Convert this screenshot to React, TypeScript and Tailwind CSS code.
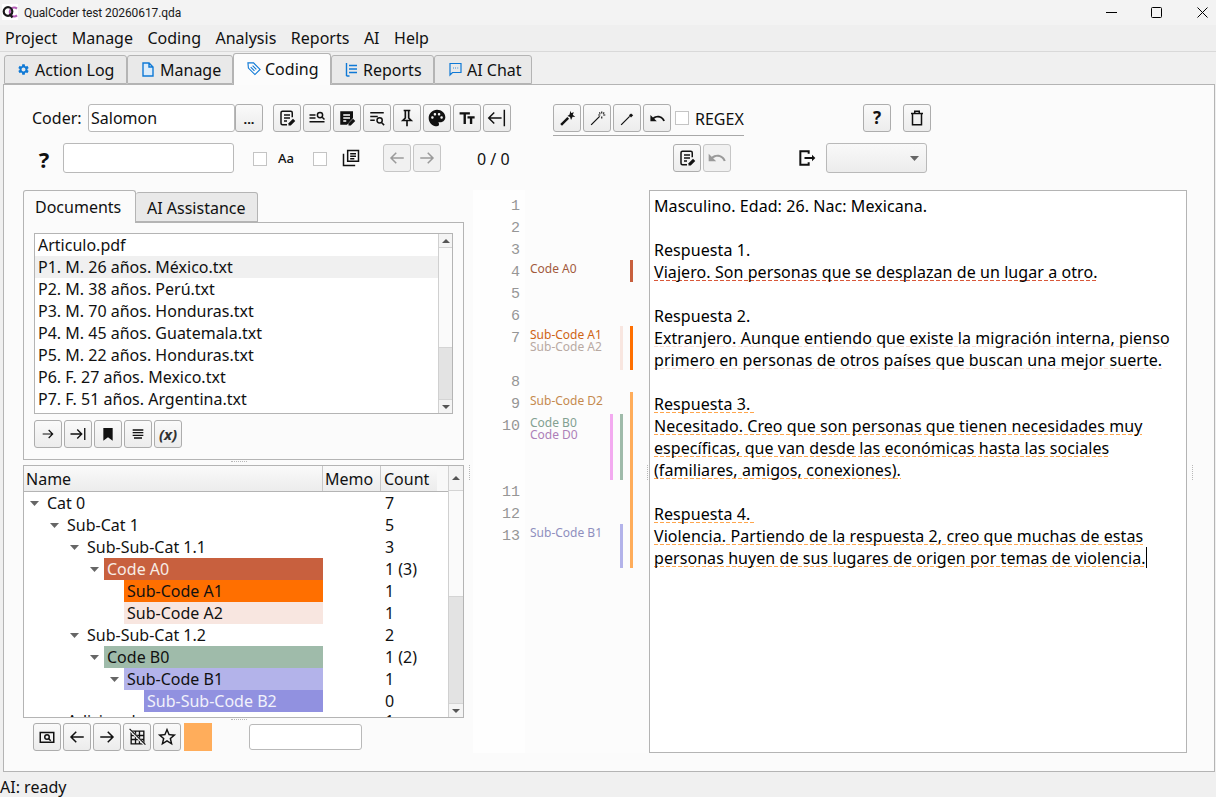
import React from "react";
import { MdPalette, MdFormatSize, MdUndo, MdSettings, MdStarBorder } from "react-icons/md";

type P = { children?: React.ReactNode; className?: string };
const S = ({ children, s = 18, className = "" }: { children: React.ReactNode; s?: number; className?: string }) => (
  <svg width={s} height={s} viewBox="0 0 24 24" fill="none" stroke="currentColor" strokeWidth={2} className={className}>
    {children}
  </svg>
);

const Btn = ({ children, className = "", off = false }: P & { off?: boolean }) => (
  <div className={"w-[28px] h-[28px] shrink-0 flex items-center justify-center rounded-[3px] border " + (off ? "border-[#c6c6c6] bg-[#f1f1f1] text-[#9a9a9a] " : "border-[#adadad] bg-linear-to-b from-[#fafafa] to-[#ececec] text-[#111] ") + className}>
    {children}
  </div>
);
const Check = ({ className = "" }: P) => <div className={"w-[14px] h-[14px] shrink-0 border border-[#c4c4c4] bg-white " + className} />;

const NoteEdit = () => (
  <S><path d="M19 11V5a2 2 0 0 0-2-2H6a2 2 0 0 0-2 2v14a2 2 0 0 0 2 2h6M8 8h8M8 12h8M8 16h4" /><path d="M14 22v-3l6-6 3 3-6 6z" fill="currentColor" stroke="none" /></S>
);
const NoteEditFill = () => (
  <S><path d="M3 3h17v9l-8 9H3z" fill="currentColor" stroke="none" /><path d="M7 8h9M7 12h9M7 16h4" stroke="#fff" /><path d="M14 22v-3l6-6 3 3-6 6z" fill="currentColor" stroke="none" /></S>
);
const ArrowL = () => <S><path d="M21 12H4M11 5l-7 7 7 7" /></S>;
const ArrowR = () => <S><path d="M3 12h17M13 5l7 7-7 7" /></S>;
const Wand = ({ n }: { n: number }) => (
  <S s={17}>
    <path d={n === 0 ? "M3 21l10-10" : "M3 21l12-12"} strokeWidth={n === 0 ? 3.4 : 1.8} />
    {n === 0 && <path d="M16 1l1.2 3.4L21 3l-1.6 3.6L23 10l-3.8-.4L17 14l-1.4-4L12 8.6l3-2.2z" fill="currentColor" stroke="none" />}
    {n === 1 && <path d="M18 2v3M18 9v3M13 7h3M20 7h3M14.5 3.5l1.5 1.5M21.5 3.5L20 5" strokeWidth={1.6} />}
    {n === 2 && <path d="M17 5l3 2.5-3 3-3-3z" fill="currentColor" stroke="none" />}
  </S>
);

const Arrow = () => (
  <svg width="9" height="5" viewBox="0 0 9 5" className="shrink-0"><path d="M0 0h9L4.5 5z" fill="#666" /></svg>
);
const Up = () => <svg width="8" height="4" viewBox="0 0 8 4"><path d="M0 4h8L4 0z" fill="#555" /></svg>;
const Down = () => <svg width="8" height="4" viewBox="0 0 8 4"><path d="M0 0h8L4 4z" fill="#555" /></svg>;

const Scrollbar = ({ thumb, w, capTop = 14 }: { thumb: number; w: string; capTop?: number }) => (
  <div className={w + " shrink-0 flex flex-col bg-[#e3e3e3] border-l border-[#d0d0d0]"}>
    <div className="bg-[#f4f4f4] flex items-center justify-center border-b border-[#d4d4d4]" style={{ height: capTop }}><Up /></div>
    <div className="bg-[#fafafa] border-b border-[#d4d4d4]" style={{ height: thumb }} />
    <div className="flex-1" />
    <div className="h-[14px] bg-[#f4f4f4] flex items-center justify-center border-t border-[#d4d4d4]"><Down /></div>
  </div>
);

const tabs = [
  { t: "Action Log", w: "w-[123px]", pl: "pl-[12px]", gap: "gap-[5px]", i: <span className="w-[13px] flex justify-center"><MdSettings size={15} /></span> },
  { t: "Manage", w: "w-[106px]", pl: "pl-[14px]", gap: "gap-[6px]", i: <svg width="12" height="15" viewBox="0 0 12 15" fill="#dcecfa" stroke="currentColor" strokeWidth="1.4"><path d="M1 1h6l4 4v9H1zM7 1v4h4" /></svg> },
  { t: "Coding", w: "w-[98px]", pl: "pl-[13px]", gap: "gap-[4px]", active: true, i: <svg width="14" height="15" viewBox="0 0 15 15" fill="none" stroke="currentColor" strokeWidth="1.2"><path d="M1 1.5h6l7 7-5.5 5.5-7-7zM4 6l4 4M6 4.5l4 4" /></svg> },
  { t: "Reports", w: "w-[103px]", pl: "pl-[13px]", gap: "gap-[5px]", i: <svg width="13" height="15" viewBox="0 0 13 15" fill="none" stroke="currentColor" strokeWidth="1.4"><path d="M1.5 1v13M4 3.5h8M4 7h8M4 10.5h8M1.5 14h3" /></svg> },
  { t: "AI Chat", w: "w-[98px]", pl: "pl-[14px]", gap: "gap-[5px]", i: <svg width="13" height="15" viewBox="0 0 13 15" fill="none" stroke="currentColor" strokeWidth="1.2"><path d="M1 1.5h11v9H3.5L1 13zM4 6h.8M6.2 6H7M8.4 6h.8" /></svg> },
];

const docs = ["Articulo.pdf", "P1. M. 26 años. México.txt", "P2. M. 38 años. Perú.txt", "P3. M. 70 años. Honduras.txt", "P4. M. 45 años. Guatemala.txt", "P5. M. 22 años. Honduras.txt", "P6. F. 27 años. Mexico.txt", "P7. F. 51 años. Argentina.txt"];

const tree: { n: string; l: number; c: string; a?: boolean; bg?: string; fg?: string; last?: boolean }[] = [
  { n: "Cat 0", l: 0, c: "7", a: true },
  { n: "Sub-Cat 1", l: 1, c: "5", a: true },
  { n: "Sub-Sub-Cat 1.1", l: 2, c: "3", a: true },
  { n: "Code A0", l: 3, c: "1 (3)", a: true, bg: "bg-[#c8603e]", fg: "text-[#f7ece6]" },
  { n: "Sub-Code A1", l: 4, c: "1", bg: "bg-[#ff6f00]" },
  { n: "Sub-Code A2", l: 4, c: "1", bg: "bg-[#f8e6e0]" },
  { n: "Sub-Sub-Cat 1.2", l: 2, c: "2", a: true },
  { n: "Code B0", l: 3, c: "1 (2)", a: true, bg: "bg-[#9fbbaa]" },
  { n: "Sub-Code B1", l: 4, c: "1", a: true, bg: "bg-[#b3b3ea]" },
  { n: "Sub-Sub-Code B2", l: 5, c: "0", bg: "bg-[#9191e0]", fg: "text-[#f1f1fb]" },
  { n: "Adicional", l: 1, c: "1", last: true },
];

const nums: [string, string][] = [
  ["1", "row-start-1"], ["2", "row-start-2"], ["3", "row-start-3"], ["4", "row-start-4"], ["5", "row-start-5"], ["6", "row-start-6"], ["7", "row-start-7"],
  ["8", "row-start-8"], ["9", "row-start-9"], ["10", "row-start-10"], ["11", "row-start-11"], ["12", "row-start-12"], ["13", "row-start-13"],
];

const RED = "bg-[repeating-linear-gradient(to_right,#d8583a_0_4px,transparent_4px_6px)]";
const PALE = "bg-[repeating-linear-gradient(to_right,#f8dcd2_0_4px,transparent_4px_6px)]";
const ORANGE = "bg-[repeating-linear-gradient(to_right,#ffa64d_0_4px,transparent_4px_6px)]";
const U = ({ c, children }: { c: string; children: React.ReactNode }) => (
  <span className={"whitespace-pre bg-[length:100%_1px] bg-[position:0_19px] bg-no-repeat " + c}>{children}</span>
);

export default function App() {
  return (
    <div className="w-[1216px] h-[797px] flex flex-col overflow-hidden bg-[#f0f0f0] text-[16px] leading-[22px] text-[#111] font-['Noto_Sans',sans-serif]">
      {/* title bar */}
      <div className="h-[25px] shrink-0 bg-[#f3f3f3] flex items-center text-[12px]">
        <svg width="16" height="16" viewBox="0 0 16 16" className="ml-[2px] mb-[1px] bg-white" fill="none" strokeWidth="2.2">
          <path d="M15 4.6a4.4 4.4 0 1 0 0 6.8" stroke="#b35bb5" />
          <circle cx="6" cy="7.5" r="4.3" stroke="#1a1a1a" />
          <path d="M7.5 10l3 3.5" stroke="#1a1a1a" />
        </svg>
        <span className="ml-[6px] text-[#1a1a1a] font-['Roboto',sans-serif] tracking-[-0.1px]">QualCoder test 20260617.qda</span>
        <div className="ml-auto flex items-center text-black">
          <svg width="11" height="11" viewBox="0 0 11 11" stroke="currentColor" fill="none"><path d="M0 5.5h11" /></svg>
          <svg width="11" height="11" viewBox="0 0 11 11" stroke="currentColor" fill="none" className="ml-[34px]"><rect x=".5" y=".5" width="10" height="10" rx="1" /></svg>
          <svg width="11" height="11" viewBox="0 0 11 11" stroke="currentColor" fill="none" className="ml-[35px] mr-[8px]"><path d="M.5.5l10 10M10.5.5l-10 10" /></svg>
        </div>
      </div>
      {/* menu */}
      <div className="h-[27px] shrink-0 bg-[#efefef] border-b border-[#d9d9d9] flex items-center gap-[14.5px] pl-[5px] pb-[1px]">
        {["Project", "Manage", "Coding", "Analysis", "Reports", "AI", "Help"].map((m) => <span key={m}>{m}</span>)}
      </div>
      {/* tabs */}
      <div className="h-[32px] shrink-0 flex items-end pl-[4px] relative z-10">
        {tabs.map((t) =>
          <div key={t.t} className={"flex items-center border-[#b4b4b4] rounded-t-[3px] border-l border-t border-r " + t.w + " " + t.pl + " " + t.gap + " " + (t.active ? "h-[32px] -mb-px bg-[#fcfcfc] border-b-0 pb-[2px]" : "h-[29px] bg-[#e9e9e9] border-b border-b-[#b4b4b4]")}>
            <span className="text-[#0f79d6] flex">{t.i}</span>
            <span>{t.t}</span>
          </div>
        )}
      </div>
      {/* panel */}
      <div className="h-[688px] shrink-0 ml-[3px] mr-[1px] border border-[#b4b4b4] bg-[#fbfbfb] relative">
        {/* row 1 */}
        <div className="mt-[19px] h-[28px] flex items-start">
          <span className="ml-[28px] w-[56px] leading-[28px]">Coder:</span>
          <div className="w-[147px] h-[28px] bg-white border border-[#b9b9b9] rounded-[3px] pl-[2px] leading-[26px]">Salomon</div>
          <Btn className="font-bold text-[13px]"><span className="pt-[2px]">...</span></Btn>
          <div className="ml-[10px] flex gap-[2px]">
            <Btn><NoteEdit /></Btn>
            <Btn><S><path d="M2 8h8M2 12h8M2 17h20" /><circle cx="16" cy="8" r="3.5" /><path d="M19 11l3 3" /></S></Btn>
            <Btn><NoteEditFill /></Btn>
            <Btn><S><path d="M3 5h18M3 10h10M3 15h6" /><circle cx="15.5" cy="15" r="3.5" /><path d="M18 18l3.5 3.5" /></S></Btn>
            <Btn><S s={20}><path d="M8 3h8M10 3v9l-3 3h10l-3-3V3M12 15v7" /></S></Btn>
            <Btn><MdPalette size={20} /></Btn>
            <Btn><MdFormatSize size={19} className="-scale-x-100" /></Btn>
            <Btn><S s={22} ><path d="M20 3v18M17 12H3M9 6l-6 6 6 6" strokeWidth={1.6} /></S></Btn>
          </div>
          <div className="ml-[42px] w-[191px] h-[32px] border-b border-[#a8a8a8] flex items-start shrink-0">
            <div className="flex gap-[2px]">
              <Btn><Wand n={0} /></Btn>
              <Btn><Wand n={1} /></Btn>
              <Btn><Wand n={2} /></Btn>
              <Btn><MdUndo size={17} /></Btn>
            </div>
            <Check className="ml-[4px] mt-[7px]" />
            <span className="ml-[6px] leading-[30px]">REGEX</span>
          </div>
          <Btn className="ml-[119px] font-bold text-[17px]">?</Btn>
          <Btn className="ml-[12px]"><S><path d="M4 6h16M9 6V3h6v3M6 6v15h12V6" /></S></Btn>
        </div>
        {/* row 2 */}
        <div className="mt-[11px] h-[30px] flex items-center">
          <span className="ml-[34px] w-[12px] text-center font-bold text-[22px] pt-[1px]">?</span>
          <div className="ml-[13px] w-[171px] h-[30px] bg-white border border-[#b9b9b9] rounded-[3px]" />
          <Check className="ml-[19px] mt-[2px]" />
          <span className="ml-[11px] w-[16px] text-[13px] font-medium">Aa</span>
          <Check className="ml-[19px] mt-[2px]" />
          <span className="ml-[14px] flex"><S s={20}><path d="M8 3h13v13H8zM3 7v14h14M11 7h7M11 10h7M11 13h5" strokeWidth={1.8} /></S></span>
          <div className="ml-[22px] flex gap-[2px]">
            <Btn off><ArrowL /></Btn>
            <Btn off><ArrowR /></Btn>
          </div>
          <span className="ml-[36px] w-[33px] whitespace-nowrap pt-[2px]">0 / 0</span>
          <Btn className="ml-[163px]"><NoteEdit /></Btn>
          <Btn off className="ml-[2px]"><MdUndo size={20} /></Btn>
          <span className="ml-[66px] flex"><S s={20}><path d="M14 7V4H4v16h10v-3M9 12h10" strokeWidth={2.4} /><path d="M18 8l4 4-4 4z" fill="currentColor" stroke="none" /></S></span>
          <div className="ml-[9px] w-[101px] h-[30px] rounded-[3px] border border-[#b9b9b9] bg-linear-to-b from-[#f9f9f9] to-[#ececec] flex items-center justify-end pr-[7px]"><Arrow /></div>
        </div>
        {/* main */}
        <div className="mt-[17px] h-[563px] flex items-start">
          {/* left */}
          <div className="ml-[19px] w-[441px] shrink-0 flex flex-col">
            <div className="h-[32px] flex items-end relative z-10">
              <div className="w-[113px] h-[33px] -mb-px bg-[#fbfbfb] border-l border-t border-r border-[#b4b4b4] rounded-t-[3px] pl-[11px] pt-[5px]">Documents</div>
              <div className="w-[122px] h-[30px] bg-[#e9e9e9] border-t border-r border-b border-[#b4b4b4] rounded-t-[3px] pl-[11px] pt-[4px]">AI Assistance</div>
            </div>
            <div className="h-[238px] border border-[#b4b4b4] p-[10px]">
              <div className="h-[181px] bg-white border border-[#b4b4b4] flex">
                <div className="flex-1 flex flex-col overflow-hidden">
                  {docs.map((d, i) => <div key={d} className={"h-[22px] shrink-0 pl-[3px] " + (i === 1 ? "bg-[#f0f0f0]" : "")}>{d}</div>)}
                </div>
                <Scrollbar thumb={100} w="w-[14px]" />
              </div>
              <div className="mt-[6px] flex gap-[2px]">
                <Btn><S s={16}><path d="M4 12h15M13 6l6 6-6 6" strokeWidth={1.8} /></S></Btn>
                <Btn><S s={18}><path d="M2 12h15M11 6l6 6-6 6M21 4v16" strokeWidth={1.8} /></S></Btn>
                <Btn><S s={16}><path d="M5 3h14v19l-7-5-7 5z" fill="currentColor" stroke="none" /></S></Btn>
                <Btn><S s={16}><path d="M4 6h16M4 10h16M4 14h16M6 18h12" strokeWidth={2} /></S></Btn>
                <Btn className="text-[15px] font-bold italic text-[#333]">(x)</Btn>
              </div>
            </div>
            <div className="mt-[5px] h-[253px] border border-[#b4b4b4] bg-white flex overflow-hidden">
              <div className="flex-1 min-w-0 flex flex-col">
                <div className="h-[26px] shrink-0 flex border-b border-[#b4b4b4] bg-linear-to-b from-[#fafafa] to-[#ececec] leading-[26px]">
                  <div className="w-[299px] pl-[2px] border-r border-[#c8c8c8]">Name</div>
                  <div className="w-[58px] pl-[2px] border-r border-[#c8c8c8]">Memo</div>
                  <div className="w-[56px] pl-[3px]">Count</div>
                  <div className="flex-1 bg-[#f8f8f8]" />
                </div>
                <div className="flex-1 overflow-hidden">
                  {tree.map((r) => (
                    <div key={r.n} className={"h-[22px] flex " + (r.last ? "-mt-[2px]" : "")}>
                      <div className="w-[299px] flex shrink-0">
                        <div className="shrink-0" style={{ width: 20 * r.l }} />
                        <div className="w-[20px] shrink-0 flex items-center pl-[6px]">{r.a && <Arrow />}</div>
                        <div className={"flex-1 pl-[3px] " + (r.bg || "") + " " + (r.fg || "")}>{r.n}</div>
                      </div>
                      <div className="w-[58px] shrink-0" />
                      <div className="pl-[4px]">{r.c}</div>
                    </div>
                  ))}
                </div>
              </div>
              <Scrollbar thumb={106} w="w-[15px]" capTop={25} />
            </div>
            <div className="mt-[5px] ml-[10px] flex items-center">
              <div className="flex gap-[2px]">
                <Btn><S s={18}><rect x="3" y="6" width="18" height="13" /><circle cx="12" cy="12" r="3" /><path d="M14 14l3 3" /></S></Btn>
                <Btn><ArrowL /></Btn>
                <Btn><ArrowR /></Btn>
                <Btn><S s={19}><path d="M4 4h16v16H4zM4 9.5h16M4 14.5h16M9.5 4v16M14.5 4v16" strokeWidth={1.7} /><path d="M3 3l18 18" stroke="#f4f4f4" strokeWidth={3} /><path d="M2 1l20 20" strokeWidth={1.4} /></S></Btn>
                <Btn><MdStarBorder size={22} /></Btn>
              </div>
              <div className="ml-[3px] w-[28px] h-[28px] bg-[#ffad5b]" />
              <div className="ml-[37px] w-[113px] h-[26px] bg-white border border-[#b9b9b9] rounded-[3px]" />
            </div>
          </div>
          {/* gutter */}
          <div className="ml-[9px] w-[176px] h-[563px] shrink-0 bg-[linear-gradient(to_right,#fefefe_52px,#fcfcfc_52px)] pt-[4px] grid grid-cols-[52px_85px_3px_7px_3px_7px_3px] grid-rows-[22px_22px_22px_22px_22px_22px_44px_22px_22px_66px_22px_22px_44px] content-start">
            {nums.map(([n, r]) => (
              <div key={n} className={"col-start-1 pr-[5px] pt-[2px] text-right text-[15px] text-[#969696] font-['Liberation_Mono',monospace] " + r}>{n}</div>
            ))}
            <div className="col-start-2 row-start-4 pl-[5px] pt-[3px] text-[12px] leading-[12px] text-[#a25a3c]">Code A0</div>
            <div className="col-start-2 row-start-7 pl-[5px] pt-[3px] text-[12px] leading-[12px]">
              <div className="text-[#cf6414]">Sub-Code A1</div>
              <div className="text-[#b8a9a2]">Sub-Code A2</div>
            </div>
            <div className="col-start-2 row-start-9 pl-[5px] pt-[3px] text-[12px] leading-[12px] text-[#c58a4e]">Sub-Code D2</div>
            <div className="col-start-2 row-start-10 pl-[5px] pt-[3px] text-[12px] leading-[12px]">
              <div className="text-[#82a091]">Code B0</div>
              <div className="text-[#ad7fb8]">Code D0</div>
            </div>
            <div className="col-start-2 row-start-13 pl-[5px] pt-[3px] text-[12px] leading-[12px] text-[#8f8fbe]">Sub-Code B1</div>

            <div className="col-start-7 row-start-4 bg-[#c8603e]" />
            <div className="col-start-7 row-start-7 bg-[#ff6f00]" />
            <div className="col-start-5 row-start-7 bg-[#f8e6e0]" />
            <div className="col-start-7 row-start-9 row-span-5 bg-[#ffad5b]" />
            <div className="col-start-5 row-start-10 bg-[#9fbbaa]" />
            <div className="col-start-3 row-start-10 bg-[#f3aaf0]" />
            <div className="col-start-5 row-start-13 bg-[#b3b3ea]" />
          </div>
          {/* editor */}
          <div className="w-[538px] h-[563px] shrink-0 bg-white border border-[#b4b4b4] pl-[4px] pt-[4px] text-black tracking-[0.07px]">
            <div>Masculino. Edad: 26. Nac: Mexicana.</div>
            <div className="h-[22px]" />
            <div>Respuesta 1.</div>
            <div><U c={RED}>Viajero. Son personas que se desplazan de un lugar a otro.</U></div>
            <div className="h-[22px]" />
            <div>Respuesta 2.</div>
            <div><U c={PALE}>Extranjero. Aunque entiendo que existe la migración interna, pienso</U></div>
            <div><U c={PALE}>primero en personas de otros países que buscan una mejor suerte.</U></div>
            <div className="h-[22px]" />
            <div><U c={ORANGE}>Respuesta 3. </U></div>
            <div><U c={ORANGE}>Necesitado. Creo que son personas que tienen necesidades muy</U></div>
            <div><U c={ORANGE}>específicas, que van desde las económicas hasta las sociales</U></div>
            <div><U c={ORANGE}>(familiares, amigos, conexiones).</U></div>
            <div className="h-[22px]" />
            <div><U c={ORANGE}>Respuesta 4. </U></div>
            <div><U c={ORANGE}>Violencia. Partiendo de la respuesta 2, creo que muchas de estas</U></div>
            <div><U c={ORANGE}>personas huyen de sus lugares de origen por temas de violencia.</U><span className="inline-block w-px h-[21px] bg-black align-top" /></div>
          </div>
        </div>
        {/* splitter handles */}
        <div className="absolute left-[227px] top-[376px] w-[16px] border-t border-dotted border-[#b8b8b8]" />
        <div className="absolute left-[227px] top-[634px] w-[16px] border-t border-dotted border-[#b8b8b8]" />
        <div className="absolute left-[465px] top-[380px] h-[15px] border-l border-dotted border-[#b8b8b8]" />
        <div className="absolute left-[643px] top-[380px] h-[15px] border-l border-dotted border-[#b8b8b8]" />
        <div className="absolute left-[1188px] top-[380px] h-[15px] border-l border-dotted border-[#b8b8b8]" />
      </div>
      {/* status */}
      <div className="h-[25px] shrink-0 leading-[30px]">AI: ready</div>
    </div>
  );
}
